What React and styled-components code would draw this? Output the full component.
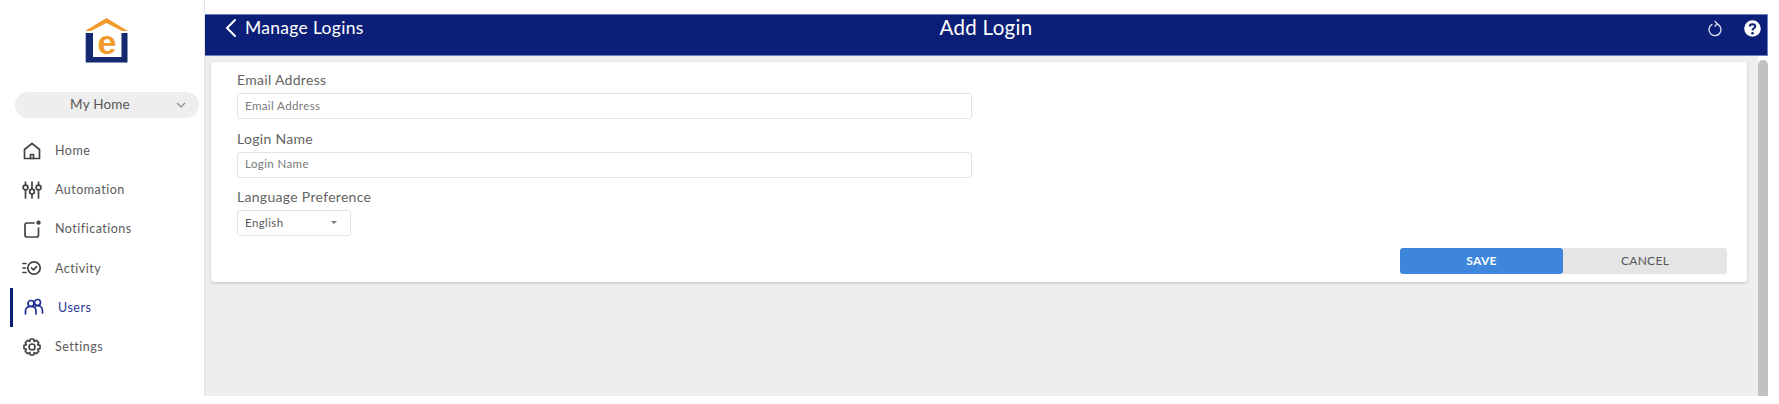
import React from 'react';
import styled, { createGlobalStyle } from 'styled-components';

const GlobalStyle = createGlobalStyle`
  html, body {
    margin: 0;
    padding: 0;
    background: #ffffff;
    overflow: hidden;
  }
  * {
    box-sizing: border-box;
  }
`;

const Page = styled.div`
  width: 1779px;
  height: 404px;
  display: flex;
  font-family: "Lato", "Liberation Sans", sans-serif;
  color: #555555;
  background: #ffffff;
`;

const Sidebar = styled.aside`
  width: 205px;
  flex-shrink: 0;
  height: 396px;
  border-right: 1px solid #e4e4e4;
  padding: 18px 0 0 0;
  display: flex;
  flex-direction: column;
`;

const LogoWrap = styled.div`
  height: 74px;
  padding-left: 85px;
`;

const HomePicker = styled.div`
  margin-left: 15px;
  width: 184px;
  height: 26px;
  border-radius: 13px;
  background: #eeeeee;
  display: flex;
  align-items: center;
  justify-content: center;
  position: relative;
  font-size: 13.5px;
  letter-spacing: 0.2px;
  color: #555555;
  padding: 0 14px 2px 0;
  svg {
    position: absolute;
    right: 13px;
    top: 10px;
  }
`;

const Nav = styled.nav`
  margin-top: 13px;
  display: flex;
  flex-direction: column;
`;

const NavItem = styled.div`
  height: 39.2px;
  margin-left: 10px;
  padding-left: ${(p) => (p.$active ? '11px' : '9px')};
  border-left: 3px solid ${(p) => (p.$active ? '#0b1f78' : 'transparent')};
  display: flex;
  align-items: center;
  gap: ${(p) => (p.$active ? '14px' : '13px')};
  font-size: 12.5px;
  letter-spacing: 0.5px;
  color: ${(p) => (p.$active ? '#2c3a9a' : '#5a5a5a')};
`;

const NavIcon = styled.svg`
  width: 20px;
  height: 20px;
  flex-shrink: 0;
  fill: none;
  stroke: ${(p) => (p.$active ? '#1f2f94' : '#444444')};
  stroke-width: 1.7;
  stroke-linecap: round;
  stroke-linejoin: round;
`;

const Main = styled.main`
  width: 1563px;
  margin-top: 14px;
  height: 382px;
  background: #eeeeee;
  display: flex;
  flex-direction: column;
`;

const Header = styled.header`
  height: 42px;
  background: #0b1f78;
  border: 1px solid #6f7cc0;
  border-width: 1px 1px 1px 0;
  color: #ffffff;
  display: grid;
  grid-template-columns: 1fr auto 1fr;
`;

const BackLink = styled.div`
  display: flex;
  align-items: center;
  gap: 8px;
  height: 25px;
  padding-left: 20px;
  font-size: 17.5px;
  letter-spacing: 0.3px;
`;

const Title = styled.div`
  height: 25px;
  line-height: 25px;
  font-size: 20.5px;
  letter-spacing: 0.3px;
`;

const HeaderActions = styled.div`
  display: flex;
  justify-content: flex-end;
  align-items: center;
  height: 26px;
  gap: 21px;
  padding-right: 6px;
`;

const Body = styled.div`
  flex: 1;
  display: flex;
  min-height: 0;
`;

const Content = styled.div`
  flex: 1;
  padding: 6px 10px 0 6px;
`;

const Card = styled.section`
  height: 220px;
  background: #ffffff;
  border-radius: 3px;
  box-shadow: 0 1px 3px rgba(0, 0, 0, 0.2);
  padding: 9px 20px 0 26px;
  display: flex;
  flex-direction: column;
`;

const Label = styled.label`
  font-size: 14px;
  line-height: 17px;
  letter-spacing: 0.3px;
  color: #636363;
  margin-bottom: 5px;
`;

const TextInput = styled.div`
  width: 735px;
  height: 26px;
  border: 1px solid #e2e2e2;
  border-radius: 3px;
  padding: 0 0 2px 7px;
  display: flex;
  align-items: center;
  font-size: 11.5px;
  letter-spacing: 0.4px;
  color: #7a7a7a;
  margin-bottom: 10.5px;
`;

const SelectBox = styled(TextInput)`
  width: 114px;
  justify-content: space-between;
  padding-right: 13px;
  color: #5a5a5a;
  margin-bottom: 12px;
`;

const Caret = styled.span`
  width: 0;
  height: 0;
  border-left: 3.5px solid transparent;
  border-right: 3.5px solid transparent;
  border-top: 3.5px solid #777777;
`;

const ButtonRow = styled.div`
  display: flex;
  justify-content: flex-end;
`;

const Button = styled.div`
  width: ${(p) => (p.$primary ? '163px' : '164px')};
  height: 26px;
  display: flex;
  align-items: center;
  justify-content: center;
  padding-bottom: 1px;
  font-size: 12px;
  letter-spacing: 0.3px;
  font-weight: ${(p) => (p.$primary ? 700 : 400)};
  color: ${(p) => (p.$primary ? '#ffffff' : '#555555')};
  background: ${(p) => (p.$primary ? '#3d86dc' : '#e5e5e5')};
  border-radius: ${(p) => (p.$primary ? '3px' : '0 3px 3px 0')};
`;

const ScrollTrack = styled.div`
  width: 10px;
  padding-top: 4px;
  background: #ffffff;
  margin-left: 1px;
`;

const ScrollThumb = styled.div`
  height: 100%;
  background: #c1c1c1;
  border-radius: 5px 5px 0 0;
`;

const Logo = () => (
  <svg width="44" height="46" viewBox="0 0 44 46">
    <path d="M0.7 15V44.5H42.5V15H36.5V39H8V15Z" fill="#14296f" />
    <path d="M0 13L21.5 0L43 13H37L21.5 5L6 13Z" fill="#f39a2d" />
    <text x="22" y="35.5" textAnchor="middle" fontFamily="Liberation Sans" fontWeight="700" fontSize="34" fill="#f39a2d">e</text>
  </svg>
);

const HomeIcon = () => (
  <NavIcon viewBox="0 0 20 20">
    <path d="M2.5 8.5L10 2.5L17.5 8.5V17.5H2.5Z" />
    <path d="M8.5 17.5V13.5H11.5V17.5" />
  </NavIcon>
);

const AutomationIcon = () => (
  <NavIcon viewBox="0 0 20 20">
    <path d="M3.5 2V5M3.5 10V18M10 2V9M10 14V18M16.5 2V5M16.5 10V18" />
    <circle cx="3.5" cy="7.5" r="2.4" />
    <circle cx="10" cy="11.5" r="2.4" />
    <circle cx="16.5" cy="7.5" r="2.4" />
  </NavIcon>
);

const NotificationIcon = () => (
  <NavIcon viewBox="0 0 20 20">
    <path d="M12 4H5Q3 4 3 6V16Q3 18 5 18H14.5Q16.5 18 16.5 16V9" />
    <circle cx="16.5" cy="3.6" r="2.2" fill="#444444" stroke="none" />
  </NavIcon>
);

const ActivityIcon = () => (
  <NavIcon viewBox="0 0 20 20">
    <circle cx="12" cy="10" r="6.2" />
    <path d="M9.5 10L11.4 11.9L14.6 8.6M1 5.5H4M1 10H3.5M1 14.5H4" />
  </NavIcon>
);

const UsersIcon = () => (
  <NavIcon viewBox="0 0 20 20" $active>
    <circle cx="7" cy="6.5" r="3" />
    <circle cx="13.5" cy="5.5" r="3" />
    <path d="M1.5 17V14Q1.5 9.5 7 9.5Q12 9.5 12 14V17M11.5 9Q18 7.5 18.5 13.5V16" />
  </NavIcon>
);

const SettingsIcon = () => (
  <NavIcon viewBox="0 0 20 20">
    <circle cx="10" cy="10" r="3" />
    <path d="M8.4 2H11.6L12.2 4.4L14.3 3.3L16.7 5.7L15.6 7.8L18 8.4V11.6L15.6 12.2L16.7 14.3L14.3 16.7L12.2 15.6L11.6 18H8.4L7.8 15.6L5.7 16.7L3.3 14.3L4.4 12.2L2 11.6V8.4L4.4 7.8L3.3 5.7L5.7 3.3L7.8 4.4Z" />
  </NavIcon>
);

const navItems = [
  { label: 'Home', Icon: HomeIcon },
  { label: 'Automation', Icon: AutomationIcon },
  { label: 'Notifications', Icon: NotificationIcon },
  { label: 'Activity', Icon: ActivityIcon },
  { label: 'Users', Icon: UsersIcon, active: true },
  { label: 'Settings', Icon: SettingsIcon },
];

export default function App() {
  return (
    <>
      <GlobalStyle />
      <Page>
        <Sidebar>
          <LogoWrap>
            <Logo />
          </LogoWrap>
          <HomePicker>
            My Home
            <svg width="10" height="7" viewBox="0 0 10 7" fill="none" stroke="#888888" strokeWidth="1.2">
              <path d="M1 1L5 5L9 1" />
            </svg>
          </HomePicker>
          <Nav>
            {navItems.map(({ label, Icon, active }) => (
              <NavItem key={label} $active={active}>
                <Icon />
                {label}
              </NavItem>
            ))}
          </Nav>
        </Sidebar>
        <Main>
          <Header>
            <BackLink>
              <svg width="12" height="20" viewBox="0 0 12 20" fill="none" stroke="#ffffff" strokeWidth="2" strokeLinecap="round">
                <path d="M10 2L2 10L10 18" />
              </svg>
              Manage Logins
            </BackLink>
            <Title>Add Login</Title>
            <HeaderActions>
              <svg width="16" height="17" viewBox="0 0 16 17" fill="none" stroke="#dfe2f0" strokeWidth="1.3" strokeLinecap="round">
                <path d="M5 4.4A6 6 0 1 0 10.5 4.2" />
                <path d="M8 1.5L10.5 4L8 6" />
              </svg>
              <svg width="17" height="17" viewBox="0 0 17 17">
                <circle cx="8.5" cy="8.5" r="8.3" fill="#ffffff" />
                <path d="M5.8 6.4C5.8 3.4 11.2 3.4 11.2 6.4C11.2 8.4 8.5 8.2 8.5 10.4" fill="none" stroke="#0b1f78" strokeWidth="2" />
                <circle cx="8.5" cy="13.2" r="1.3" fill="#0b1f78" />
              </svg>
            </HeaderActions>
          </Header>
          <Body>
            <Content>
              <Card>
                <Label>Email Address</Label>
                <TextInput>Email Address</TextInput>
                <Label>Login Name</Label>
                <TextInput>Login Name</TextInput>
                <Label>Language Preference</Label>
                <SelectBox>
                  English
                  <Caret />
                </SelectBox>
                <ButtonRow>
                  <Button $primary>SAVE</Button>
                  <Button>CANCEL</Button>
                </ButtonRow>
              </Card>
            </Content>
            <ScrollTrack>
              <ScrollThumb />
            </ScrollTrack>
          </Body>
        </Main>
      </Page>
    </>
  );
}
